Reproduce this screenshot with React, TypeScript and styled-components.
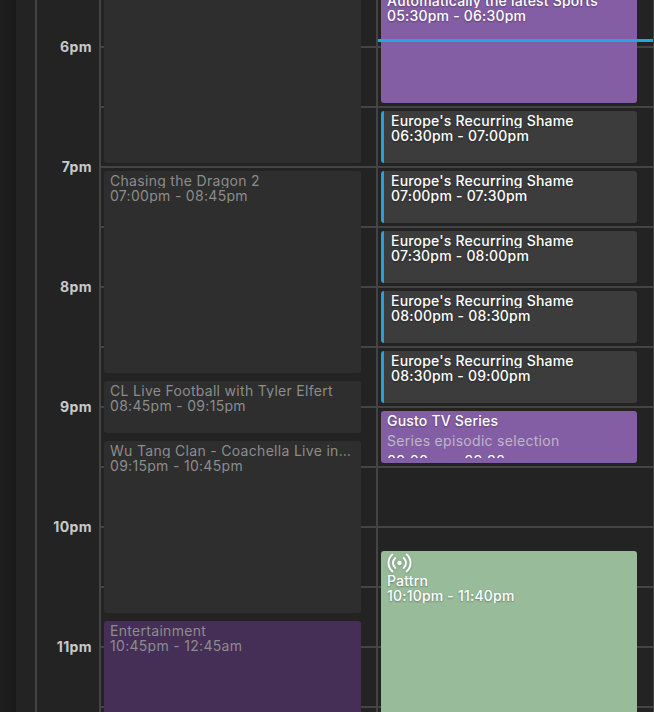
import React from "react";
import styled, { createGlobalStyle } from "styled-components";

const Global = createGlobalStyle`
  html, body { margin: 0; padding: 0; background: #222; }
  #root { width: 654px; height: 712px; overflow: hidden; }
`;

const Page = styled.div`
  display: flex;
  width: 654px;
  height: 712px;
  overflow: hidden;
  background: #232323;
  font-family: Inter, "Open Sans", "Liberation Sans", sans-serif;
  font-size: 14px;
  line-height: 15px;
`;

const EdgeStrip = styled.div`
  flex: 0 0 16px;
  background: linear-gradient(90deg, #1f1f1f, #191919);
`;

const Gutter = styled.div`
  flex: 0 0 19px;
  background: #232323;
`;

const TimeColumn = styled.div`
  flex: 0 0 64px;
  box-sizing: border-box;
  border-left: 2px solid #444;
  padding-top: 37px;
  background: #232323;
`;

const HourLabel = styled.div`
  height: 120px;
  box-sizing: border-box;
  line-height: 20px;
  text-align: right;
  padding-right: 7px;
  color: #c9c9c9;
  font-weight: 700;
  font-size: 14px;
  letter-spacing: 0.4px;
`;

const DayColumn = styled.div`
  flex: 0 0 277px;
  box-sizing: border-box;
  border-left: 2px solid #444;
  overflow: hidden;
  position: relative;
  background-color: #232323;
  background-image: linear-gradient(#444 0 2px, transparent 2px);
  background-size: 100% 60px;
  background-position: 0 46px;
`;

const EventGrid = styled.div`
  display: grid;
  margin-top: -13px;
  grid-auto-rows: 10px;
  grid-template-columns: 1fr;
`;

const Event = styled.div<{ $start: number; $span: number; $bg: string; $right: number }>`
  grid-row: ${(p) => p.$start + 1} / span ${(p) => p.$span};
  grid-column: 1;
  margin: 4px ${(p) => p.$right}px 4px 3px;
  box-sizing: border-box;
  background: ${(p) => p.$bg};
  border-radius: 3px;
  padding: 2px 10px 5px 6px;
  min-width: 0;
  display: flex;
  flex-direction: column;
`;

const RecurringEvent = styled(Event)`
  border-left: 3px solid #2a9fd8;
  padding-left: 7px;
`;

const Clip = styled.div`
  overflow: hidden;
  flex: 1;
  min-height: 0;
`;

const Title = styled.div<{ $tone: string }>`
  white-space: nowrap;
  overflow: hidden;
  text-overflow: ellipsis;
  color: ${(p) => p.$tone};
  font-weight: ${(p) => (p.$tone === "#fff" ? 500 : 400)};
  letter-spacing: ${(p) => (p.$tone === "#fff" ? 0.2 : 0.3)}px;
  ${(p) => (p.$tone === "#fff" ? "text-shadow: 0 1px 2px rgba(0,0,0,.35);" : "")}
`;

const Subtitle = styled.div`
  margin: 5px 0 5px;
  color: #bdb6c4;
  letter-spacing: 0.3px;
`;

const NowLine = styled.div`
  position: absolute;
  left: 0;
  right: 0;
  top: 39px;
  height: 3px;
  background: #22a7df;
`;

const RightEdge = styled.div`
  flex: 0 0 1px;
  background: #444;
`;

const BroadcastIcon = styled.svg`
  display: block;
  flex: none;
  width: 25px;
  height: 20px;
  filter: drop-shadow(0 1px 1px rgba(0,0,0,.2));
`;

const Broadcast = () => (
  <BroadcastIcon viewBox="0 0 25 20" fill="none" stroke="#fff" strokeWidth="2" strokeLinecap="round">
    <circle cx="12.5" cy="10" r="2.2" fill="#fff" stroke="none" />
    <path d="M8.32 5.02a6.5 6.5 0 0 0 0 9.96" />
    <path d="M16.68 5.02a6.5 6.5 0 0 1 0 9.96" />
    <path d="M5.43 1.57a11 11 0 0 0 0 16.86" />
    <path d="M19.57 1.57a11 11 0 0 1 0 16.86" />
  </BroadcastIcon>
);

type Ev = { title: string; time: string; start: number; span: number; bg?: string };

const DIM = "#2e2e2e";
const GREY = "#8c8c8c";

const left: Ev[] = [
  { title: "", time: "", start: 0, span: 18 },
  { title: "Chasing the Dragon 2", time: "07:00pm - 08:45pm", start: 18, span: 21 },
  { title: "CL Live Football with Tyler Elfert", time: "08:45pm - 09:15pm", start: 39, span: 6 },
  { title: "Wu Tang Clan - Coachella Live in Concert", time: "09:15pm - 10:45pm", start: 45, span: 18 },
  { title: "Entertainment", time: "10:45pm - 12:45am", start: 63, span: 24, bg: "#452f57" },
];

const recurring: Ev[] = [
  { title: "Europe's Recurring Shame", time: "06:30pm - 07:00pm", start: 12, span: 6 },
  { title: "Europe's Recurring Shame", time: "07:00pm - 07:30pm", start: 18, span: 6 },
  { title: "Europe's Recurring Shame", time: "07:30pm - 08:00pm", start: 24, span: 6 },
  { title: "Europe's Recurring Shame", time: "08:00pm - 08:30pm", start: 30, span: 6 },
  { title: "Europe's Recurring Shame", time: "08:30pm - 09:00pm", start: 36, span: 6 },
];

export default function App() {
  return (
    <Page>
      <Global />
      <EdgeStrip />
      <Gutter />
      <TimeColumn>
        {["6pm", "7pm", "8pm", "9pm", "10pm", "11pm"].map((h) => (
          <HourLabel key={h}>{h}</HourLabel>
        ))}
      </TimeColumn>
      <DayColumn>
        <EventGrid>
          {left.map((e) => (
            <Event key={e.start} $start={e.start} $span={e.span} $bg={e.bg ?? DIM} $right={15}>
              <Title $tone={GREY}>{e.title}</Title>
              <Title $tone={GREY}>{e.time}</Title>
            </Event>
          ))}
        </EventGrid>
      </DayColumn>
      <DayColumn>
        <EventGrid>
          <Event $start={0} $span={12} $bg="#845ea4" $right={16}>
            <Title $tone="#fff">Automatically the latest Sports</Title>
            <Title $tone="#fff">05:30pm - 06:30pm</Title>
          </Event>
          {recurring.map((e) => (
            <RecurringEvent key={e.start} $start={e.start} $span={e.span} $bg="#3c3c3c" $right={16}>
              <Title $tone="#fff">{e.title}</Title>
              <Title $tone="#fff">{e.time}</Title>
            </RecurringEvent>
          ))}
          <Event $start={42} $span={6} $bg="#845ea4" $right={16}>
            <Clip>
              <Title $tone="#fff">Gusto TV Series</Title>
              <Subtitle>Series episodic selection</Subtitle>
              <Title $tone="#fff">09:00pm - 09:30pm</Title>
            </Clip>
          </Event>
          <Event $start={56} $span={18} $bg="#98bb9a" $right={16}>
            <Broadcast />
            <Title $tone="#fff">Pattrn</Title>
            <Title $tone="#fff">10:10pm - 11:40pm</Title>
          </Event>
        </EventGrid>
        <NowLine />
      </DayColumn>
      <RightEdge />
    </Page>
  );
}
